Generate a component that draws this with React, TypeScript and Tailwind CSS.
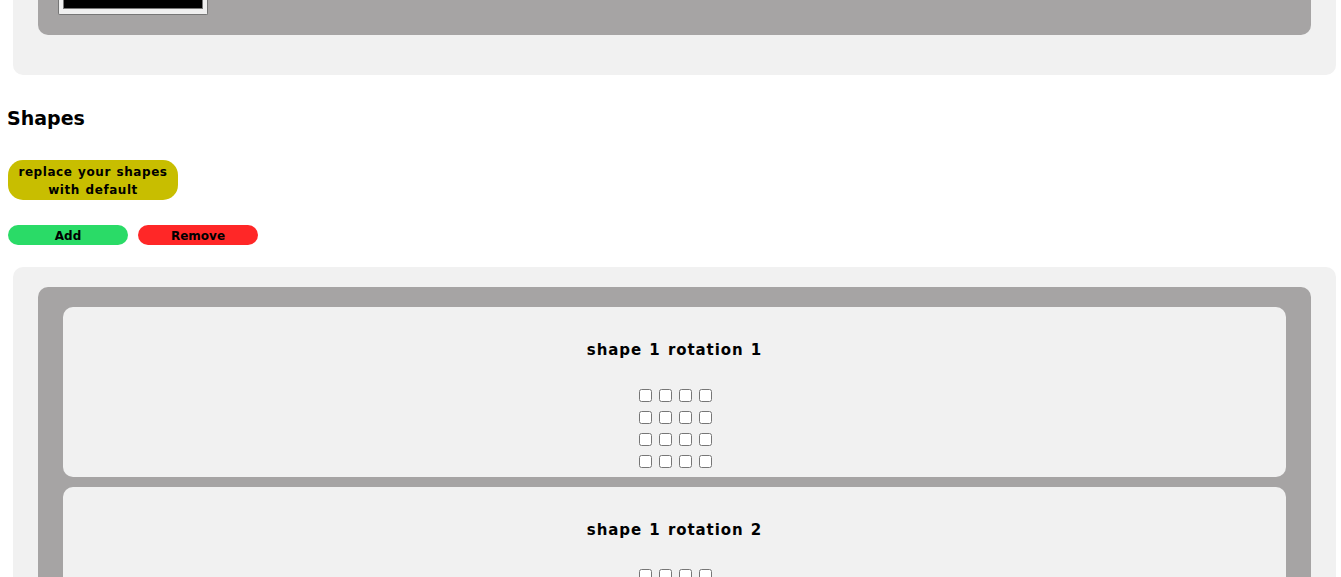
const CELLS = Array.from({ length: 16 }, (_, i) => i);

function Rotation({ shape, rotation }: { shape: number; rotation: number }) {
  return (
    <section className="flex h-[170px] shrink-0 flex-col items-center rounded-[10px] bg-[#f1f1f1] pt-[33px]">
      <h3 className="h-5 whitespace-nowrap text-[15px] leading-5 font-bold tracking-[0.9px] [word-spacing:1.2px]">
        shape {shape} rotation {rotation}
      </h3>
      <div className="mt-[29px] ml-0.5 grid grid-cols-4 gap-x-[7px] gap-y-[9px]">
        {CELLS.map((cell) => (
          <input key={cell} type="checkbox" className="m-0 block size-[13px]" />
        ))}
      </div>
    </section>
  );
}

export default function App() {
  return (
    <main className="flex h-screen flex-col overflow-hidden bg-white pr-[5px] pl-2 font-['DejaVu_Sans',sans-serif] text-black">
      <div className="ml-[5px] h-[75px] shrink-0 rounded-b-[10px] bg-[#f1f1f1] px-[25px]">
        <div className="h-[35px] rounded-b-[10px] bg-[#a6a4a4] pl-5">
          <div className="h-[15px] w-[150px] rounded-b-[2px] border border-t-0 border-[#767676] bg-[#efefef] px-1 pb-[5px]">
            <div className="h-[9px] border border-t-0 border-[#777777] bg-black" />
          </div>
        </div>
      </div>

      <h2 className="-ml-px mt-[31px] h-6 shrink-0 text-[19px] leading-6 font-bold">Shapes</h2>

      <button className="mt-[30px] h-10 w-[170px] shrink-0 rounded-[15px] bg-[#c8be00] pt-0.5 text-[12px] leading-[18px] font-bold tracking-[0.55px] whitespace-nowrap [word-spacing:1px]">
        replace your shapes
        <br />
        with default
      </button>

      <div className="mt-[25px] flex h-5 shrink-0 gap-2.5">
        <button className="w-[120px] rounded-[10px] bg-[#2adb67] pt-px text-[12px] leading-5 font-bold">Add</button>
        <button className="w-[120px] rounded-[10px] bg-[#ff2727] pt-px text-[12px] leading-5 font-bold">Remove</button>
      </div>

      <div className="mt-[22px] ml-[5px] shrink-0 rounded-t-[10px] bg-[#f1f1f1] px-[25px] pt-5">
        <div className="flex flex-col gap-2.5 rounded-t-[10px] bg-[#a6a4a4] px-[25px] pt-5">
          <Rotation shape={1} rotation={1} />
          <Rotation shape={1} rotation={2} />
        </div>
      </div>
    </main>
  );
}
